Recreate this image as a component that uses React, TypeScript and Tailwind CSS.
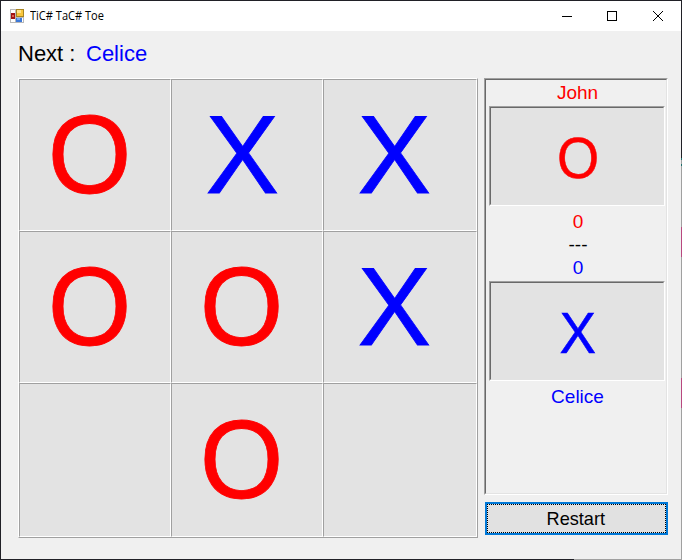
import React from "react";

type Mark = "O" | "X" | "";

const board: Mark[] = ["O", "X", "X", "O", "O", "X", "", "O", ""];

function AppIcon() {
  return (
    <svg width="14" height="14" viewBox="0 0 14 14" shapeRendering="crispEdges">
      <rect width="14" height="14" fill="#b9b9b9" />
      <rect x="1" y="1" width="4" height="3" fill="#fff" />
      <rect x="1" y="10" width="4" height="3" fill="#fff" />
      <rect x="12" y="9" width="1" height="4" fill="#fff" />
      <rect x="1" y="4" width="4" height="6" fill="#a01414" />
      <rect x="2" y="6" width="2" height="2" fill="#e0604c" />
      <rect x="6" y="0" width="8" height="8" fill="#a88420" />
      <rect x="7" y="1" width="6" height="6" fill="#f8c63c" />
      <rect x="7" y="1" width="4" height="3" fill="#ffe48c" />
      <rect x="6" y="9" width="6" height="4" fill="#3c78d8" />
      <rect x="7" y="9" width="3" height="2" fill="#78aaf0" />
    </svg>
  );
}

function TitleBar() {
  return (
    <header className="flex h-[30px] shrink-0 items-center bg-white pl-[9px] pr-[17px]">
      <AppIcon />
      <h1 className="ml-[6px] flex-1 origin-left scale-x-[0.92] whitespace-nowrap font-['Open_Sans','Noto_Sans',sans-serif] text-[12px] leading-none text-black">
        TiC# TaC# Toe
      </h1>
      <svg width="102" height="11" viewBox="0 0 102 11" fill="none" stroke="#000">
        <path d="M0 5.5H10M45.500 .5H54.500V9.500H45.500Z" shapeRendering="crispEdges" />
        <path d="M91 0L101 10M101 0L91 10" />
      </svg>
    </header>
  );
}

function Cell({ mark }: { mark: Mark }) {
  return (
    <div className="flex items-center border border-b-white border-l-[#a0a0a0] border-r-white border-t-[#a0a0a0] bg-[#e3e3e3]">
      <div className="flex h-[150px] w-[140px] items-center justify-center text-[112px] leading-none">
        {mark === "O" && (
          <span className="scale-x-[0.96] text-[#ff0000] [-webkit-text-stroke:0.8px_#ff0000]">O</span>
        )}
        {mark === "X" && (
          <span className="scale-x-[0.985] text-[#0000ff] [-webkit-text-stroke:0.8px_#0000ff]">X</span>
        )}
      </div>
    </div>
  );
}

function MarkBox({ children }: { children: React.ReactNode }) {
  return (
    <div className="h-[100px] w-[176px] shrink-0 border border-b-white border-l-[#a0a0a0] border-r-white border-t-[#a0a0a0]">
      <div className="flex h-full items-center justify-center border border-b-[#e3e3e3] border-l-[#696969] border-r-[#e3e3e3] border-t-[#696969] bg-[#e3e3e3] pl-[2px] pt-[6px] text-[56.500px] leading-none">
        {children}
      </div>
    </div>
  );
}

function WindowEdge() {
  return (
    <div className="flex w-px shrink-0 flex-col bg-[#a0a0a0]">
      <div className="h-[158px] bg-[#202026]" />
      <div className="h-[2px] bg-[#1c6f6c]" />
      <div className="mt-[4px] h-[2px] bg-[#1c6f6c]" />
      <div className="mt-[61px] h-[30px] bg-[#b8487f]" />
      <div className="mt-[121px] h-[30px] bg-[#b8487f]" />
    </div>
  );
}

export default function App() {
  return (
    <div className="flex h-[560px] w-[682px] bg-[#f0f0f0] font-['Liberation_Sans',Arial,sans-serif]">
      <div className="flex w-[681px] flex-col border-l border-t border-[#202026]">
        <TitleBar />
        <div className="flex h-[47px] shrink-0 items-center pb-[2px] pl-[17px] text-[22px] leading-none">
          <span className="w-[68px] whitespace-nowrap text-black">Next :</span>
          <span className="text-[#0000ff]">Celice</span>
        </div>
        <main className="flex flex-1 pl-[17px]">
          <div className="grid h-[460px] w-[460px] grid-cols-[152px_152px_154px] grid-rows-[152px_152px_154px] border border-b-[#a0a0a0] border-l-white border-r-[#a0a0a0] border-t-white">
            {board.map((mark, i) => (
              <Cell key={i} mark={mark} />
            ))}
          </div>
          <aside className="ml-[6px] flex w-[184px] flex-col">
            <section className="h-[417px] border border-b-white border-l-[#a0a0a0] border-r-white border-t-[#a0a0a0]">
              <div className="flex h-full flex-col border border-b-[#e3e3e3] border-l-[#696969] border-r-[#e3e3e3] border-t-[#696969] pl-[3px] text-center text-[19px] leading-[23px]">
                <div className="h-[26px] w-[177px] pt-[1px] text-[#ff0000]">John</div>
                <MarkBox>
                  <span className="scale-x-[0.96] text-[#ff0000] [-webkit-text-stroke:0.5px_#ff0000]">O</span>
                </MarkBox>
                <div className="w-[178px] pb-[2px] pt-[4px]">
                  <div className="text-[#ff0000]">0</div>
                  <div className="text-black">---</div>
                  <div className="text-[#0000ff]">0</div>
                </div>
                <MarkBox>
                  <span className="scale-x-[0.97] text-[#0000ff] [-webkit-text-stroke:0.5px_#0000ff]">X</span>
                </MarkBox>
                <div className="w-[177px] pt-[4px] text-[#0000ff]">Celice</div>
              </div>
            </section>
            <button className="ml-[1px] mt-[7px] h-[33px] w-[183px] border-2 border-[#0078d7] bg-[#e1e1e1] text-[18.500px] leading-none text-black">
              <span className="flex h-full items-center justify-center border border-dotted border-black pr-[2px] pt-[1px]">
                <span className="scale-x-[0.98]">Restart</span>
              </span>
            </button>
          </aside>
        </main>
        <div className="flex h-px shrink-0 bg-[#a0a0a0]">
          <div className="w-[573px] bg-[#202026]" />
        </div>
      </div>
      <WindowEdge />
    </div>
  );
}
